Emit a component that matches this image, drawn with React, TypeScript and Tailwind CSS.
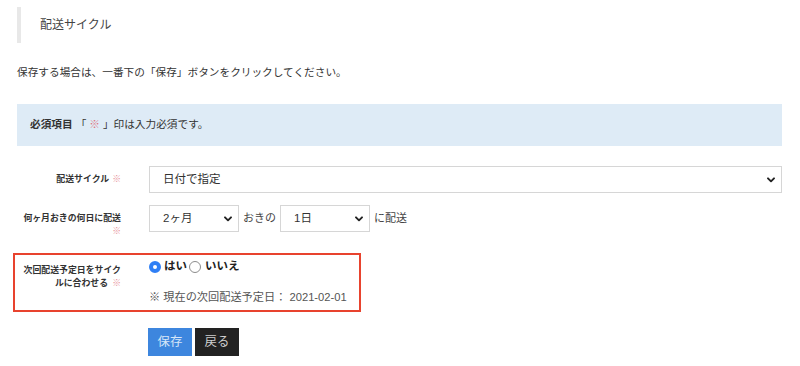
import React from "react";

const FONT = { fontFamily: '"Liberation Sans", "Noto Sans CJK JP", sans-serif' };

function Chevron() {
  return (
    <svg
      className="pointer-events-none absolute right-[7px] top-1/2 -translate-y-1/2"
      width="8"
      height="6"
      viewBox="0 0 8 6"
    >
      <path d="M1 1.3 L4 4.3 L7 1.3" fill="none" stroke="#222" strokeWidth="1.9" strokeLinecap="round" strokeLinejoin="round" />
    </svg>
  );
}

function Select({ className, value, options }: { className: string; value: string; options: string[] }) {
  return (
    <div className={"relative " + className}>
      <select
        defaultValue={value}
        className="h-full w-full appearance-none rounded-none border border-[#d6d6d6] bg-white pl-[13px] pr-6 text-[11.5px] text-[#333] outline-none"
        style={FONT}
      >
        {options.map((o) => (
          <option key={o}>{o}</option>
        ))}
      </select>
      <Chevron />
    </div>
  );
}

export default function App() {
  return (
    <div className="w-[800px] h-[366px] overflow-hidden bg-white pl-[17px] pr-[18px] pt-[7px] text-[#333]" style={FONT}>
      <div className="flex h-[36px] items-center border-l-4 border-[#e8e8e8] pl-[19px] text-[12px] text-[#444]">
        配送サイクル
      </div>

      <p className="mt-[21px] text-[10.66px] leading-[16px] text-[#333]">
        保存する場合は、一番下の「保存」ボタンをクリックしてください。
      </p>

      <div className="mt-[24px] flex h-[42px] items-center bg-[#deebf6] pl-[13px] text-[10.66px] text-[#333]">
        <span className="font-bold">必須項目</span>
        <span className="ml-[3px]">
          「 <span className="text-[#e0707c]">※</span> 」印は入力必須です。
        </span>
      </div>

      {/* Row 1 */}
      <div className="mt-[20px] flex">
        <div className="w-[132px] shrink-0 pr-[28px] pt-[7px] text-right text-[8.9px] font-bold leading-[13px] text-[#333]">
          配送サイクル<span className="ml-[3px] font-normal text-[#e8909a]">※</span>
        </div>
        <Select className="h-[27px] flex-1" value="日付で指定" options={["日付で指定", "曜日で指定"]} />
      </div>

      {/* Row 2 */}
      <div className="mt-[12px] flex">
        <div className="w-[132px] shrink-0 pr-[28px] pt-[7px] text-right text-[8.9px] font-bold leading-[13px] text-[#333]">
          何ヶ月おきの何日に配送 <span className="font-normal text-[#e8909a]">※</span>
        </div>
        <div className="flex h-[27px] items-center gap-[4px] text-[11px] text-[#444]">
          <Select className="h-[27px] w-[90px]" value="2ヶ月" options={["1ヶ月", "2ヶ月", "3ヶ月"]} />
          <span>おきの</span>
          <Select className="h-[27px] w-[90px]" value="1日" options={["1日", "2日", "3日"]} />
          <span>に配送</span>
        </div>
      </div>

      {/* Row 3 */}
      <div className="mt-[15px] -ml-[4px] flex w-fit border-2 border-[#e8432e] pl-[2px] pr-[12px]">
        <div className="w-[132px] shrink-0 pr-[28px] pt-[9px] text-right text-[8.9px] font-bold leading-[13px] text-[#333]">
          次回配送予定日をサイクルに合わせる<span className="ml-[4px] inline-block font-normal text-[#e8909a]">※</span>
        </div>
        <div className="flex flex-col pt-[4px] pb-[5px]">
          <div className="flex h-[16px] items-center text-[11.5px] font-bold text-[#222]">
            <label className="flex items-center">
              <input
                type="radio"
                name="sync"
                defaultChecked
                className="m-0 h-[12px] w-[12px] appearance-none rounded-full border-[4px] border-[#2f7ff5] bg-white"
              />
              <span className="ml-[3px]">はい</span>
            </label>
            <label className="ml-[2px] flex items-center">
              <input
                type="radio"
                name="sync"
                className="m-0 h-[12px] w-[12px] appearance-none rounded-full border border-[#8c8c8c] bg-white"
              />
              <span className="ml-[4px]">いいえ</span>
            </label>
          </div>
          <div className="mt-[14px] h-[16px] text-[11.2px] leading-[16px] text-[#555]">
            ※ 現在の次回配送予定日： 2021-02-01
          </div>
        </div>
      </div>

      {/* Buttons */}
      <div className="mt-[16px] flex gap-[3px] pl-[131px]">
        <button className="h-[28px] w-[44px] bg-[#3d86de] text-[12.4px] text-[#d6e6f8]" style={FONT}>
          保存
        </button>
        <button className="h-[28px] w-[44px] bg-[#222] text-[12.4px] text-[#cfcfcf]" style={FONT}>
          戻る
        </button>
      </div>
    </div>
  );
}
